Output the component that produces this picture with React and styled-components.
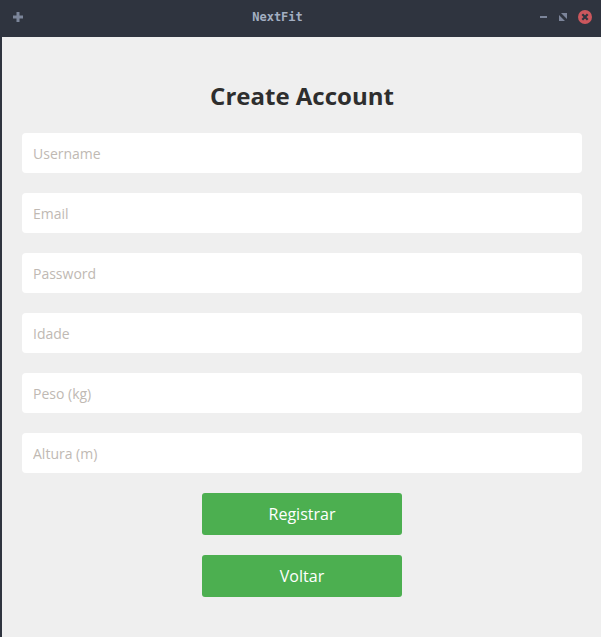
import React from "react";
import styled, { createGlobalStyle } from "styled-components";

const Global = createGlobalStyle`
  html, body { margin: 0; padding: 0; background: #2f343f; }
  body { font-family: "Noto Sans", "Open Sans", sans-serif; }
  * { box-sizing: border-box; }
`;

const Window = styled.div`
  width: 601px;
  height: 637px;
  display: flex;
  flex-direction: column;
  background: #2f343f;
`;

const TitleBar = styled.div`
  height: 37px;
  flex: none;
  display: flex;
  align-items: center;
  padding: 0 8px 0 12px;
  position: relative;
`;

const Title = styled.div`
  position: absolute;
  left: 0;
  right: 46px;
  top: 0;
  height: 34px;
  display: flex;
  align-items: center;
  justify-content: center;
  font-family: "DejaVu Sans Mono", "Liberation Mono", monospace;
  font-weight: bold;
  font-size: 12px;
  color: #a3afc2;
  pointer-events: none;
`;

const Controls = styled.div`
  margin-left: auto;
  display: flex;
  align-items: center;
  gap: 9px;
  margin-top: -4px;
`;

const Body = styled.div`
  flex: 1;
  margin-left: 2px;
  background: #efefef;
  display: flex;
  flex-direction: column;
  padding: 44px 19px 0 20px;
`;

const Heading = styled.h1`
  margin: 0 0 22px;
  text-align: center;
  font-family: "Open Sans", "Noto Sans", sans-serif;
  font-weight: 700;
  font-size: 24px;
  line-height: 30px;
  color: #2e2e2e;
`;

const Fields = styled.div`
  display: flex;
  flex-direction: column;
  gap: 20px;
`;

const Input = styled.input`
  height: 40px;
  border: none;
  outline: none;
  border-radius: 4px;
  background: #ffffff;
  padding: 0 11px;
  font-family: "Open Sans", "Noto Sans", sans-serif;
  font-size: 14px;
  color: #333;
  &::placeholder { color: #c0b9b3; }
`;

const Buttons = styled.div`
  margin-top: 20px;
  display: flex;
  flex-direction: column;
  align-items: center;
  gap: 20px;
`;

const Button = styled.button`
  width: 200px;
  height: 42px;
  border: none;
  border-radius: 3px;
  background: #4caf50;
  color: #ffffff;
  font-family: "Open Sans", "Noto Sans", sans-serif;
  font-size: 16px;
  cursor: pointer;
`;

const fields = ["Username", "Email", "Password", "Idade", "Peso (kg)", "Altura (m)"];

export default function App() {
  return (
    <Window>
      <Global />
      <TitleBar>
        <svg width="12" height="12" viewBox="0 0 12 12" style={{ marginTop: -3 }}>
          <rect x="4.5" y="1" width="3" height="10" fill="#7c859a" />
          <rect x="1" y="4.5" width="10" height="3" fill="#7c859a" />
        </svg>
        <Title>NextFit</Title>
        <Controls>
          <svg width="10" height="10" viewBox="0 0 10 10">
            <rect x="1" y="4" width="7" height="2" fill="#7c859a" />
          </svg>
          <svg width="10" height="10" viewBox="0 0 10 10">
            <path d="M3 1h6v6z M1 3v6h6z" fill="#7c859a" />
            <path d="M2 2l6 6" stroke="#2f343f" strokeWidth="1.6" />
          </svg>
          <svg width="16" height="16" viewBox="0 0 16 16">
            <circle cx="8" cy="8" r="7" fill="#cc575d" />
            <path d="M5.3 5.3l5.4 5.4M10.7 5.3l-5.4 5.4" stroke="#2f343f" strokeWidth="2.2" />
          </svg>
        </Controls>
      </TitleBar>
      <Body>
        <Heading>Create Account</Heading>
        <Fields>
          {fields.map((f) => (
            <Input key={f} placeholder={f} type={f === "Password" ? "password" : "text"} />
          ))}
        </Fields>
        <Buttons>
          <Button>Registrar</Button>
          <Button>Voltar</Button>
        </Buttons>
      </Body>
    </Window>
  );
}
